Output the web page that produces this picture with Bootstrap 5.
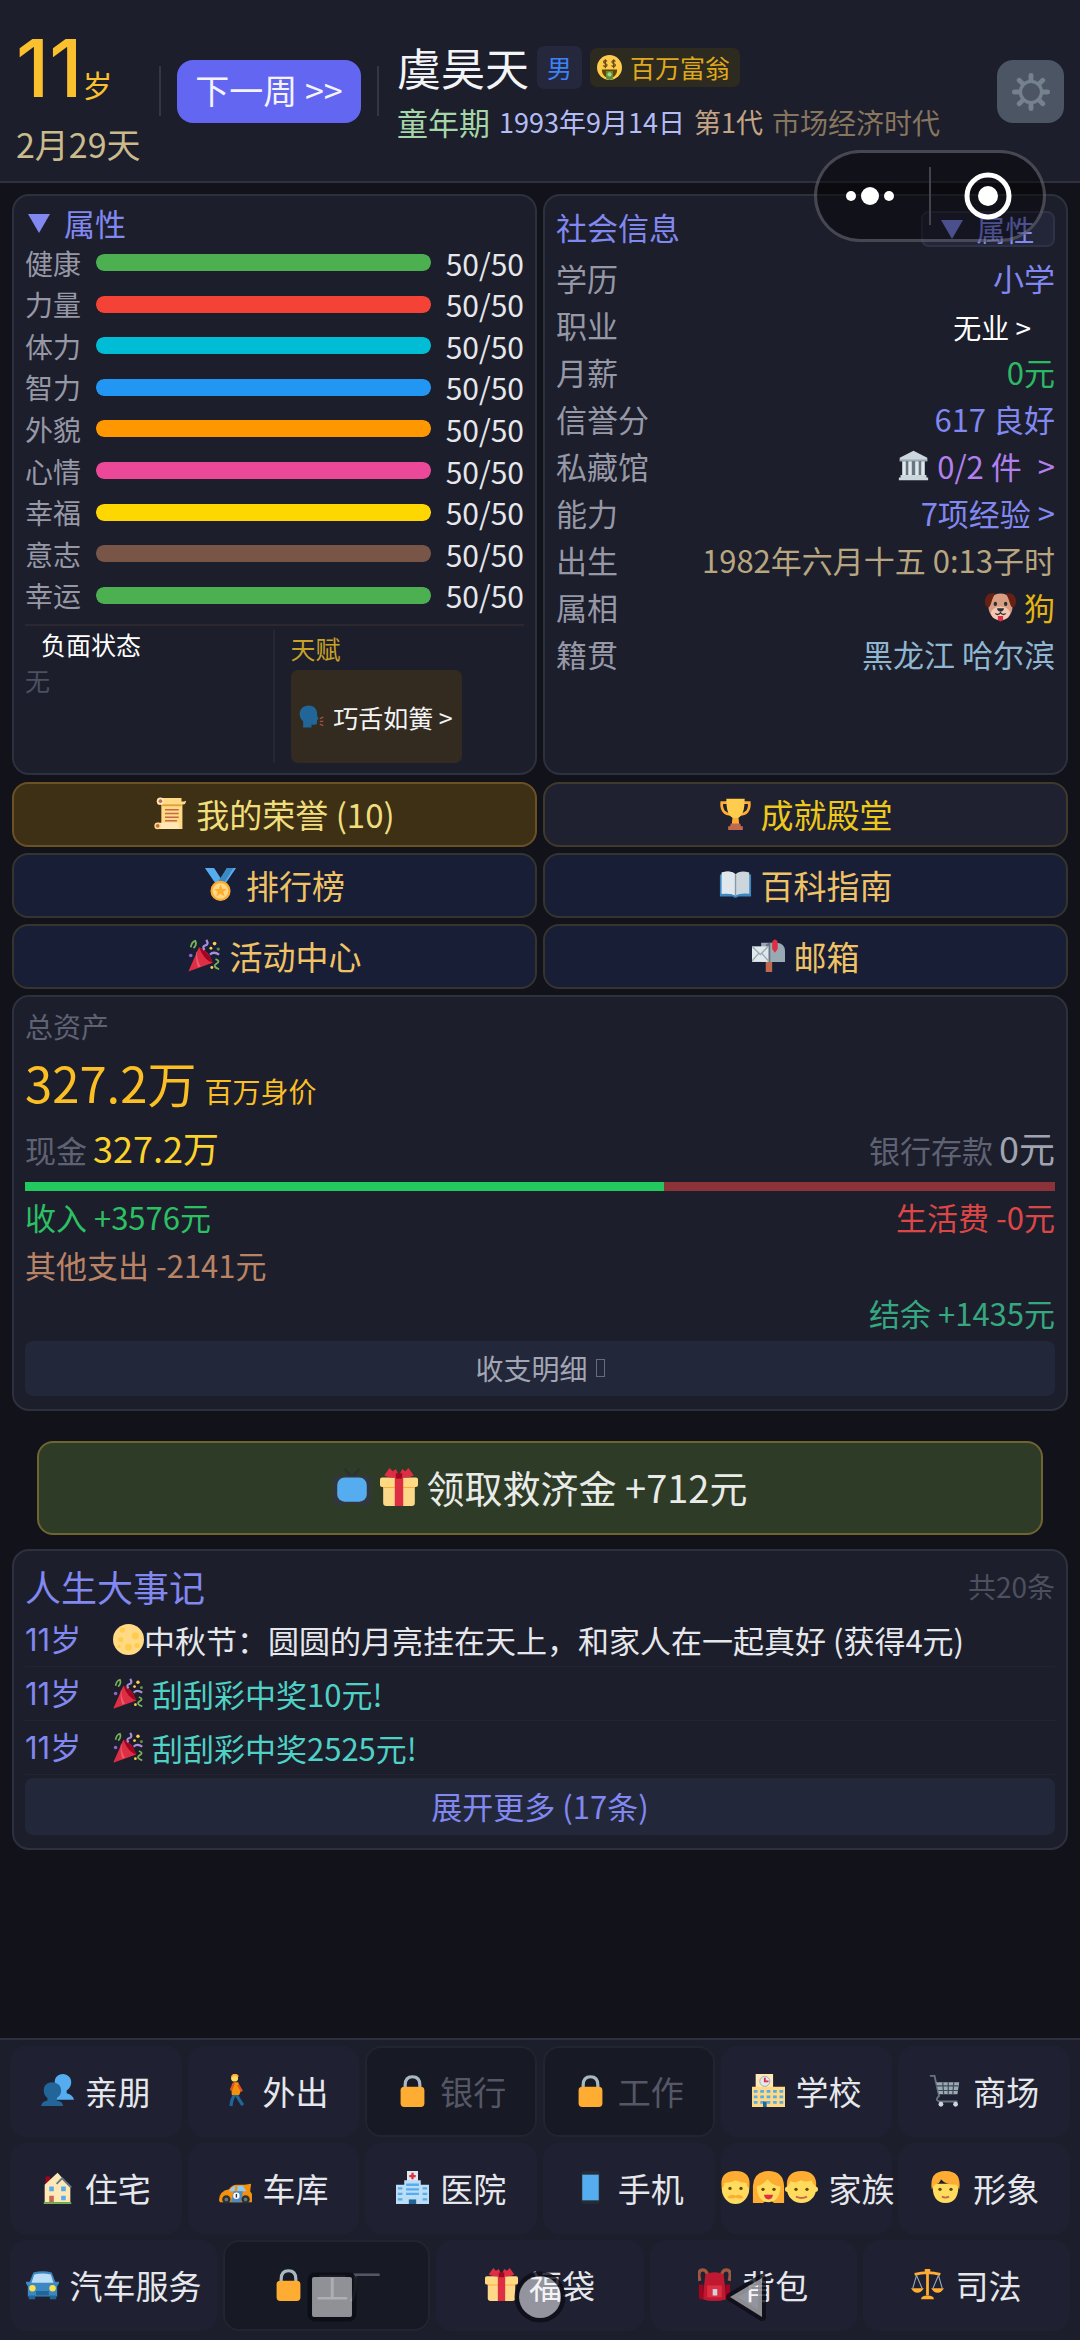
<!DOCTYPE html>
<html lang="zh-CN" data-bs-theme="dark">
<head>
<meta charset="utf-8">
<meta name="viewport" content="width=device-width, initial-scale=1">
<title>人生模拟</title>
<link rel="stylesheet" href="https://cdn.jsdelivr.net/npm/bootstrap@5.3.0/dist/css/bootstrap.min.css">
<style>
:root{--panel:#1c1e2c;--line:#2d303d;--indigo:#8188f0;--muted:#9698a6;--dim:#5f6273}
body{background:#12121b;color:#e5e7eb;font-family:"Noto Sans CJK SC",sans-serif;font-size:31px;line-height:40px}
button{font-family:inherit}
.ico{width:1em;height:1em;flex:none;display:block}
.btn{--bs-btn-border-width:0px;line-height:40px;padding:0;color:inherit;font-size:inherit}
.indigo,.btn.indigo{color:var(--indigo)}
.teal{color:#4fd1c5}
.c-gold{color:#c9a227}
.c-faint{color:#4b5160}
.c-salary{color:#2bb964}
.c-violet{color:#b180ec}
.c-sand{color:#b8a680}
.c-zodiac{color:#e5b50f}
.c-home{color:#90b6d1}
.c-cash{color:#fbd32a}
.c-bank{color:#a0a4b0}
.c-in{color:#2bc163}
.c-out{color:#dc4646}
.c-other{color:#b98365}
.c-left{color:#35a880}

.top-bar{background:var(--panel);border-bottom:2px solid #2f303f;height:183px;padding:0 16px}
.age-box{width:143px;padding-top:28px}
.age-num{font:500 80px/80px Inter,"Noto Sans CJK SC",sans-serif;color:#fbc02d}
.age-unit{font-size:30px;line-height:40px;color:#fbc02d}
.age-day{font-size:34px;color:#c9bb8c;margin-top:16px}
.v-rule{width:2px;height:50px;background:#343645;margin-top:66px}
.btn.next-week{background:#6366f1;color:#f3f4ff;font-size:34px;width:184px;height:63px;border-radius:16px;margin:60px 16px 0;padding-bottom:3px}
.who{padding:42px 0 0 18px}
.who-name{font-size:44px;line-height:50px;color:#f3f4f6}
.tag-sex{background:#25273c;color:#3b82f6;font-size:25px;line-height:43px;padding:0 10px;border-radius:7px}
.tag-rich{background:#2d2a1f;color:#e0a91c;font-size:25px;line-height:39px;padding:0 10px 0 7px;border-radius:7px}
.who-meta{font-size:27px;margin-top:10px;gap:9px}
.meta-stage{font-size:31px;color:#a5d6a7}
.meta-date{color:#b3bdf5}
.meta-gen{color:#c4a484}
.meta-era{font-size:28px;color:#87765f}
.btn.gear{background:#4b5563;width:67px;height:63px;border-radius:16px;margin-top:60px;font-size:40px}
.capsule{position:absolute;right:34px;top:150px;width:232px;height:92px;border:3px solid rgba(160,160,175,.38);border-radius:46px;background:rgba(0,0,0,.42)}

.sheet{padding:11px 12px 0}
.gap-s{gap:6px}
.panel{background:var(--panel);border:2px solid var(--line);border-radius:17px}
.tri{width:0;height:0;border:11px solid transparent;border-top:19px solid var(--indigo);border-bottom:0}

.attr{padding:10px 11px}
.attr-head{line-height:34px;padding-left:3px;gap:14px}
.attr-list{height:380px;display:grid;grid-template-rows:repeat(9,1fr);padding:2px 0 4px}
.attr-row{gap:15px}
.attr-row .progress{height:17px;border-radius:8px;background:#2a2c3a}
.attr-row .progress-bar{border-radius:8px}
.attr-name{font-size:28px;width:56px;color:var(--muted)}
.attr-val{font-size:30px}
.bar-green{background:#4caf50}
.bar-red{background:#f44336}
.bar-cyan{background:#00bcd4}
.bar-blue{background:#2196f3}
.bar-orange{background:#ff9800}
.bar-pink{background:#ec4899}
.bar-yellow{background:#ffd700}
.bar-brown{background:#795548}
.attr-foot{border-top:2px solid #2d2730;margin-top:4px;padding-top:4px;font-size:25px;line-height:28px}
.foot-l{border-right:2px solid #262735}
.btn.talent{background:#332b20;border-radius:7px;height:93px;width:171px;color:#f3f4f6;gap:9px;margin-top:8px;font-size:25px}

.info{padding:8px 11px}
.info-head{height:46px;margin-bottom:4px}
.btn.attr-pill{background:#232539;border:2px solid #2f3144;border-radius:8px;width:134px;height:36px;margin-top:4px;gap:13px;font-size:29px;line-height:32px}
.info-row{height:47px;color:var(--muted)}
.info-row dt{font-weight:400}
.info-row dd{margin:0}
.btn.job{font-size:28px;color:#fff}

.menu-area{margin-top:7px}
.btn.menu-btn{height:65px;border:2px solid #35342f;border-radius:16px;background:#181e35;color:#efc266;font-size:33px;gap:9px;padding-bottom:2px}
.btn.menu-honor{background:#3d3014;border-color:#6b5224;color:#f0de7c}
.btn.menu-hall{background:#1f2130;border-color:#3f3a2c;color:#ecc91a}

.asset{padding:9px 11px;margin-top:6px}
.cap{font-size:28px;color:var(--dim)}
.worth{color:#fbbf24;height:64px;margin-top:4px}
.worth-num{font-size:49px;line-height:64px}
.worth-tag{font-size:28px}
.cash{color:var(--dim);height:48px;margin-top:9px}
.cash-num{font-size:36px;line-height:48px}
.flow-bar{height:9px;border-radius:0;background:#8b3339;margin:11px 0 2px}
.bar-income{background:#22c95f}
.flow{line-height:48px}
.btn.sub-btn{border-radius:8px;background:#23273a}
.btn.detail{height:55px;font-size:28px;margin:4px 0;padding-bottom:2px;color:#a2a5b3}
.tofu{width:9px;height:18px;border:1px solid #666a7b}

.btn.relief{margin:30px 25px 14px;height:94px;border:2px solid #70642f;border-radius:16px;background:#2e3b26;color:#e8ebe8;font-size:38px;gap:9px;padding-bottom:2px}

.life{padding:8px 11px 13px}
.life-head{height:54px}
.life-title{font-size:36px}
.life-count{font-size:28px;color:#4d505e}
.life-row{height:54px;border-bottom:1px solid #222432}
.life-age{width:88px;font-family:Inter,"Noto Sans CJK SC",sans-serif;color:var(--indigo);flex:none}
.btn.more{height:57px;margin-top:3px;padding-bottom:2px}

.dock{background:var(--panel);border-top:2px solid #2e3040;padding:6px 10px 9px;gap:6px}
.dock-row{gap:6px}
.btn.tile{flex:1 1 0;min-width:0;height:91px;border:2px solid #1f2132;border-radius:16px;background:#1f2132;color:#e5e7eb;font-size:33px;gap:11px;white-space:nowrap;padding-bottom:2px}
.btn.tile-off{background:#171924;border-color:#22242f;color:#555766}
.sys-keys{position:fixed;left:0;right:0;bottom:14px;height:58px;gap:150px;pointer-events:none}
.sys-keys svg{width:58px;height:58px}
</style>
<script src="https://cdn.jsdelivr.net/npm/bootstrap@5.3.0/dist/js/bootstrap.bundle.min.js"></script>
</head>
<body>
<svg class="d-none" xmlns="http://www.w3.org/2000/svg">
<symbol id="i-gear" viewBox="0 0 36 36"><g fill="none" stroke="#75818d"><circle cx="18" cy="18" r="9.500" stroke-width="3"/><path stroke-width="4.400" stroke-linecap="round" d="M18 3v4M18 29v4M3 18h4M29 18h4M7.400 7.400l2.400 2.400M26.200 26.200l2.400 2.400M28.600 7.400l-2.400 2.400M9.800 26.200l-2.400 2.400"/></g></symbol>
<symbol id="i-rich" viewBox="0 0 36 36"><circle cx="18" cy="18" r="18" fill="#ffcb4c"/><path fill="#664500" d="M7 21h22c0 8-5 12-11 12S7 29 7 21z"/><path fill="#5c913b" d="M13 23h10v11q-5 4-10 0z"/><circle cx="18" cy="28" r="3" fill="#a7d28b"/><path d="M14.500 9.500c-1-2-5-2-5 .5s5 2 5 4.500-4 3-5.500.5M12 6v13M26.500 9.500c-1-2-5-2-5 .5s5 2 5 4.500-4 3-5.500.5M24 6v13" fill="none" stroke="#65471b" stroke-width="1.700"/></symbol>
<symbol id="i-speak" viewBox="0 0 36 36"><path fill="#226699" d="M14 2C6 2 1 8 1 14c0 6 3 9 5 11v9h12v-4h5q3 0 3-3v-4l2-1-2-6C27 8 22 2 14 2z"/><path d="M30 21l5-2M30 25h5M30 29l5 2" stroke="#a4503f" stroke-width="2" fill="none"/></symbol>
<symbol id="i-museum" viewBox="0 0 36 36"><path fill="#ccd6dd" d="M18 1L2 9v4h32V9zM3 29h30v3H3zM1 32h34v3H1z"/><path fill="#66757f" d="M5 13h26v16H5z"/><path fill="#e1e8ed" d="M5 13h4v16H5zM12 13h4v16h-4zM20 13h4v16h-4zM27 13h4v16h-4z"/><path fill="#99aab5" d="M2 11h32v2H2z"/></symbol>
<symbol id="i-dog" viewBox="0 0 36 36"><path fill="#d99e82" d="M18 3c9 0 14 7 14 15 0 9-6 15-14 15S4 27 4 18C4 10 9 3 18 3z"/><path fill="#662113" d="M12 3C5 1 0 5 0 12c0 5 2 7 4 7 3 0 3-9 8-16zM24 3c7-2 12 2 12 9 0 5-2 7-4 7-3 0-3-9-8-16z"/><path fill="#f4c7b5" d="M18 18c6 0 11 4 11 8s-5 8-11 8-11-4-11-8 5-8 11-8z"/><ellipse cx="12" cy="15" rx="2" ry="2.500" fill="#292f33"/><ellipse cx="24" cy="15" rx="2" ry="2.500" fill="#292f33"/><path fill="#292f33" d="M14 20h8q0 3-4 4-4-1-4-4z"/><path d="M12 26q3 3 6-1 3 4 6 1" fill="none" stroke="#292f33" stroke-width="1.500"/><path fill="#dd2e44" d="M15 29h6v4q-3 5-6 0z"/></symbol>
<symbol id="i-scroll" viewBox="0 0 36 36"><path fill="#ffd983" d="M6 1h24v4q6 0 5-2 0 6-4 5v27H8V8H4z"/><path fill="#e39f3d" d="M8 8h22v2H8z"/><ellipse cx="7" cy="4.500" rx="4" ry="4" fill="#ffe8b6"/><circle cx="7" cy="4.500" r="2" fill="#c1694f"/><path fill="#ffe8b6" d="M4 28h24q-2 3 0 7H4z"/><circle cx="4" cy="31.500" r="3.600" fill="#ffd983"/><circle cx="4" cy="31.500" r="2" fill="#c1694f"/><path d="M12 14h15M12 18h15M12 22h15M12 26h13" stroke="#c1694f" stroke-width="1.600"/></symbol>
<symbol id="i-trophy" viewBox="0 0 36 36"><path d="M9 6H3c-1 9 4 13 10 13M27 6h6c1 9-4 13-10 13" fill="none" stroke="#ffac33" stroke-width="3"/><path fill="#ffcc4d" d="M8 2h20c0 12-2 18-7 21l1 8h-8l1-8C10 20 8 14 8 2z"/><path fill="#ffac33" d="M15 23h6l1 8h-8z"/><path fill="#c1694f" d="M13 29h10l1 3h2v4H10v-4h2z"/></symbol>
<symbol id="i-medal" viewBox="0 0 36 36"><path fill="#55acee" d="M1 0h10l9 14-6 5zM35 0H25l-7 12 4 7z"/><path fill="#3b88c3" d="M25 0l-9 14 5 4L32 0z"/><circle cx="18" cy="25" r="11" fill="#ffac33"/><circle cx="18" cy="25" r="8.500" fill="#ffd983"/><path fill="#ffac33" d="M18 18l2 5h5l-4 3 1.500 5L18 28l-4.500 3 1.500-5-4-3h5z"/></symbol>
<symbol id="i-book" viewBox="0 0 36 36"><path fill="#3b88c3" d="M1 7h34v24H21q-3 3-6 0H1z"/><path fill="#ccd6dd" d="M3 5q10-3 15 2 5-5 15-2v23q-10-1-15 2-5-3-15-2z"/><path fill="#e1e8ed" d="M3 5q10-3 15 2v23q-5-3-15-2z"/><path d="M18 7v23" stroke="#8899a6" stroke-width="1.500"/></symbol>
<symbol id="i-party" viewBox="0 0 36 36"><path fill="#dd2e44" d="M12 9Q22 12 27 26L2 35q-2 1-1-1z"/><path fill="#a0041e" d="M12 9q11 5 15 17-9-2-15-17z"/><path fill="#ea596e" d="M9 15q-1 9 2 16l3-1Q9 22 10 13z"/><path d="M3 9q1-6 5-7 2 4-2 8" fill="none" stroke="#77b255" stroke-width="2"/><path d="M18 12q-3-4 1-5t1-6" fill="none" stroke="#aa8dd8" stroke-width="2.500"/><path d="M24 17q4-4 10 0" fill="none" stroke="#aa8dd8" stroke-width="2.500"/><path d="M30 22q6 2 1 5t3 6" fill="none" stroke="#77b255" stroke-width="2"/><circle cx="29" cy="5" r="2" fill="#ffcc4d"/><circle cx="25" cy="10" r="1.600" fill="#ffcc4d"/><circle cx="33" cy="11" r="1.800" fill="#5c913b"/><circle cx="3" cy="18" r="2" fill="#9266cc"/><circle cx="26" cy="31" r="1.600" fill="#ffcc4d"/></symbol>
<symbol id="i-mail" viewBox="0 0 36 36"><path fill="#c1694f" d="M15 20h7v16h-7z"/><path fill="#99aab5" d="M10 4h17q9 1 9 9v12H10z"/><path fill="#67757f" d="M14 12q0-8 6-8v21h-6z"/><path fill="#e1e8ed" d="M0 8h18v17H0z"/><path d="M0 8l9 9 9-9M0 24l7-8M18 24l-7-8" fill="none" stroke="#99aab5" stroke-width="1.500"/><path fill="#dd2e44" d="M22 3q3-5 6 0v8l-3 4-3-4z"/></symbol>
<symbol id="i-tv" viewBox="0 0 36 36"><path d="M11 1l7 8 7-8" fill="none" stroke="#292f33" stroke-width="2"/><rect x="0" y="7" width="36" height="27" rx="4" fill="#31373d"/><path fill="#31373d" d="M2 31h6v5H2zM28 31h6v5h-6z"/><rect x="4" y="9" width="28" height="23" rx="7" fill="#55acee"/></symbol>
<symbol id="i-gift" viewBox="0 0 36 36"><path fill="#fdd888" d="M3 14h30v19q0 3-3 3H6q-3 0-3-3z"/><path fill="#fcab40" d="M3 17h30v2H3z"/><rect y="9" width="36" height="9" rx="2" fill="#ffd983"/><path fill="#dd2e44" d="M14 9h8v27h-8z"/><path fill="#dd2e44" d="M18 9Q9 10 4 7L9 0l3 3 3-2 3 6 3-6 3 2 3-3 5 7q-5 3-14 2z"/><path fill="#a0041e" d="M15 5h6v5h-6z"/></symbol>
<symbol id="i-moon" viewBox="0 0 36 36"><circle cx="18" cy="18" r="18" fill="#ffd983"/><g fill="#ffcc4d"><circle cx="11" cy="7" r="3"/><circle cx="26" cy="14" r="4"/><circle cx="9" cy="18" r="3"/><circle cx="18" cy="27" r="4"/><circle cx="28" cy="25" r="3"/><circle cx="7" cy="26" r="2"/></g></symbol>
<symbol id="i-people" viewBox="0 0 36 36"><path fill="#55acee" d="M24 0c-6 0-9 4-9 9s2 8 4 10v4l-3 5h20q-1-5-8-7v-3c3-2 5-5 5-9 0-5-4-9-9-9z"/><path fill="#226699" d="M12 9c-6 0-9 4-9 9 0 4 2 7 4 8v3q-6 1-7 6h24q0-5-7-6v-3c3-1 5-4 5-8 0-5-4-9-10-9z"/></symbol>
<symbol id="i-walk" viewBox="0 0 36 36"><path d="M17 22l-3 7-1 6M18 21l4 7 4 6" fill="none" stroke="#226699" stroke-width="3.500"/><path fill="#f4900c" d="M16 9h5l3 9-2 5h-8q-1-8 2-14z"/><path d="M16 10l-3 8M21 12l4 7" fill="none" stroke="#dd551f" stroke-width="2.600"/><circle cx="17" cy="4.500" r="3.800" fill="#ffdc5d"/><path d="M14 3q3-5 7 0" fill="none" stroke="#ffac33" stroke-width="2"/></symbol>
<symbol id="i-lock" viewBox="0 0 36 36"><path d="M10 17v-5q0-9 8-9t8 9v5" fill="none" stroke="#aab8c2" stroke-width="3.500"/><rect x="5" y="14" width="26" height="22" rx="4" fill="#ffac33"/></symbol>
<symbol id="i-school" viewBox="0 0 36 36"><path fill="#ffe8b6" d="M4 0h19v15H4z"/><path fill="#ffd983" d="M0 14h36v22H0z"/><circle cx="14" cy="8" r="5.500" fill="#e1e8ed" stroke="#99aab5" stroke-width="1"/><path d="M14 4v4h4" fill="none" stroke="#dd2e44" stroke-width="2"/><path d="M2 19h32M2 25h32M2 31h32" stroke="#55acee" stroke-width="3" stroke-dasharray="4 3"/><path fill="#226699" d="M12 30h4v6h-4z"/></symbol>
<symbol id="i-cart" viewBox="0 0 36 36"><path d="M1 2h5l5 22q-5 4 0 6h20" fill="none" stroke="#66757f" stroke-width="2"/><path fill="#99aab5" d="M8 9h25l-2 13H11z"/><path d="M8 13h24M10 18h22M15 9l1 13M21 9v13M27 9l-1 13" stroke="#404a55" stroke-width="1.300"/><circle cx="13" cy="33" r="2.600" fill="#ccd6dd"/><circle cx="29" cy="33" r="2.600" fill="#ccd6dd"/></symbol>
<symbol id="i-house" viewBox="0 0 36 36"><path fill="#a0041e" d="M5 6h5v10H5z"/><path fill="#ffe8b6" d="M4 15L18 2l14 15v17H4z"/><path d="M17 14l6-6 10 10" fill="none" stroke="#66757f" stroke-width="2"/><path fill="#55acee" d="M9 17h5v5H9zM22 17h5v5h-5zM22 27h5v5h-5z"/><path fill="#c1694f" d="M9 27h5v7H9z"/><path fill="#77b255" d="M3 34h30v2H3z"/></symbol>
<symbol id="i-race" viewBox="0 0 36 36"><path fill="#f4900c" d="M0 32q0-10 11-12 3-5 8-5h9l7-1-1 8 2 3v9H1z"/><path fill="#8ccaf7" d="M12 20q3-4 6-4l-1 6h-6zM20 16h6l4 6h-10z"/><path fill="#4d8bc0" d="M16 22h10l-2 12H13z"/><circle cx="19" cy="27" r="3.500" fill="#fff"/><path d="M19 25v4" stroke="#292f33" stroke-width="1.500"/><circle cx="8" cy="31" r="4.500" fill="#292f33"/><circle cx="29" cy="31" r="4.500" fill="#292f33"/><circle cx="8" cy="31" r="2" fill="#66757f"/><circle cx="29" cy="31" r="2" fill="#66757f"/></symbol>
<symbol id="i-hosp" viewBox="0 0 36 36"><path fill="#e1e8ed" d="M12 0h12v11H12z"/><path d="M18 2v7M14.500 5.500h7" stroke="#dd2e44" stroke-width="2.500"/><path fill="#bbddf5" d="M0 15h36v21H0zM9 10h18v26H9z"/><path d="M11 15h14M11 20h14M11 25h14M2 19h5M2 25h5M2 31h5M29 19h5M29 25h5M29 31h5" stroke="#55acee" stroke-width="2.600"/><path fill="#226699" d="M14 31h8v5h-8z"/></symbol>
<symbol id="i-phone" viewBox="0 0 36 36"><rect x="8" y="0" width="20" height="36" rx="3" fill="#262c35"/><path fill="#55acee" d="M9 4h18v28H9z"/></symbol>
<symbol id="i-man" viewBox="0 0 36 36"><ellipse cx="18" cy="19" rx="15" ry="17" fill="#ffdc5d"/><path fill="#ffac33" d="M3 19Q0 0 18 0t15 19q-3-2-3-6-6 0-12-3-5 3-12 3 0 4-3 6z"/><circle cx="12" cy="19" r="1.800" fill="#664500"/><circle cx="24" cy="19" r="1.800" fill="#664500"/><path fill="#ffac33" d="M9 29q4-5 9-2 5-3 9 2-4 2-9 0-5 2-9 0z"/></symbol>
<symbol id="i-woman" viewBox="0 0 36 36"><path fill="#ffac33" d="M1 35V16Q2 0 18 0t17 16v19H24L18 30l-6 5z"/><path fill="#ffdc5d" d="M5 17q6-1 12-8 5 7 14 8-1 17-13 17T5 17z"/><circle cx="12" cy="20" r="1.800" fill="#664500"/><circle cx="24" cy="20" r="1.800" fill="#664500"/><path fill="#dd2e44" d="M13 26h10q-1 5-5 5t-5-5z"/></symbol>
<symbol id="i-boy" viewBox="0 0 36 36"><circle cx="3" cy="20" r="3" fill="#ffdc5d"/><circle cx="33" cy="20" r="3" fill="#ffdc5d"/><circle cx="18" cy="19" r="16" fill="#ffdc5d"/><path fill="#ffac33" d="M2 17Q1 0 18 0t16 17q-4-3-5-7-6 3-12 0-6 4-11 1-1 4-4 6z"/><circle cx="12" cy="20" r="1.800" fill="#664500"/><circle cx="24" cy="20" r="1.800" fill="#664500"/><path d="M12 28q6 3 12 0" fill="none" stroke="#c1694f" stroke-width="2"/></symbol>
<symbol id="i-face" viewBox="0 0 36 36"><path fill="#ffdc5d" d="M4 14h28q1 21-14 21T4 14z"/><path fill="#ffac33" d="M3 20Q0 0 18 0t15 20l-3-5Q18 15 13 9q-1 5-7 6z"/><circle cx="12" cy="20" r="1.800" fill="#664500"/><circle cx="24" cy="20" r="1.800" fill="#664500"/><path d="M14 28q4 2 8 0" fill="none" stroke="#c1694f" stroke-width="2"/></symbol>
<symbol id="i-car" viewBox="0 0 36 36"><path fill="#3b88c3" d="M8 5q10-3 20 0l4 10h4v2l-2 3v11H2V20l-2-3v-2h4z"/><path fill="#bbddf5" d="M9 7q9-2 18 0l3 9H6z"/><path fill="#226699" d="M3 30h7v4H3zM26 30h7v4h-7zM11 25h14v5H11z"/><circle cx="7" cy="22" r="3.500" fill="#ffe14d"/><circle cx="29" cy="22" r="3.500" fill="#ffe14d"/></symbol>
<symbol id="i-bag" viewBox="0 0 36 36"><path d="M11 14Q11 2 5 2T2 14M25 14Q25 2 31 2t3 12" fill="none" stroke="#a0563f" stroke-width="3.500"/><path fill="#be1931" d="M8 7q10-5 20 0l3 27q-13 4-26 0z"/><path fill="#a0041e" d="M1 18h5v16H3q-2 0-2-3zM30 18h5v13q0 3-2 3h-3z"/><path fill="#dd2e44" d="M10 19h16v13H10z"/><path fill="#ccd6dd" d="M16 23h5v7h-5z"/></symbol>
<symbol id="i-scale" viewBox="0 0 36 36"><path d="M18 2v28M4 7q14-4 28 0" fill="none" stroke="#ffac33" stroke-width="3"/><path d="M6 8L2 22M6 8l6 14M30 8l-6 14M30 8l4 14" stroke="#99aab5" stroke-width="1.200"/><path fill="#ffac33" d="M0 22h14q-3 5-7 5t-7-5zM22 22h14q-3 5-7 5t-7-5zM11 34q0-4 7-4t7 4zM15 1h6v5h-6z"/></symbol>
</svg>

<div class="d-flex flex-column min-vh-100 position-relative">
<header class="top-bar d-flex align-items-start">
  <div class="age-box">
    <div class="d-flex align-items-baseline"><span class="age-num">11</span><span class="age-unit">岁</span></div>
    <div class="age-day">2月29天</div>
  </div>
  <div class="v-rule"></div>
  <button class="btn next-week" type="button">下一周 &gt;&gt;</button>
  <div class="v-rule"></div>
  <div class="who flex-grow-1">
    <div class="d-flex align-items-center">
      <span class="who-name me-2">虞昊天</span>
      <span class="tag-sex me-2">男</span>
      <span class="tag-rich d-flex align-items-center gap-2"><svg class="ico"><use href="#i-rich"/></svg>百万富翁</span>
    </div>
    <div class="who-meta d-flex align-items-center">
      <span class="meta-stage">童年期</span><span class="meta-date">1993年9月14日</span><span class="meta-gen">第1代</span><span class="meta-era">市场经济时代</span>
    </div>
  </div>
  <button class="btn gear d-flex align-items-center justify-content-center" type="button" aria-label="设置"><svg class="ico"><use href="#i-gear"/></svg></button>
</header>

<main class="sheet d-flex flex-column">
  <div class="d-flex gap-s">
    <section class="panel attr w-50">
      <div class="attr-head indigo d-flex align-items-center"><span class="tri"></span>属性</div>
      <div class="attr-list">
        <div class="attr-row d-flex align-items-center"><span class="attr-name">健康</span><div class="progress flex-grow-1"><div class="progress-bar bar-green" style="width:100%"></div></div><span class="attr-val">50/50</span></div>
        <div class="attr-row d-flex align-items-center"><span class="attr-name">力量</span><div class="progress flex-grow-1"><div class="progress-bar bar-red" style="width:100%"></div></div><span class="attr-val">50/50</span></div>
        <div class="attr-row d-flex align-items-center"><span class="attr-name">体力</span><div class="progress flex-grow-1"><div class="progress-bar bar-cyan" style="width:100%"></div></div><span class="attr-val">50/50</span></div>
        <div class="attr-row d-flex align-items-center"><span class="attr-name">智力</span><div class="progress flex-grow-1"><div class="progress-bar bar-blue" style="width:100%"></div></div><span class="attr-val">50/50</span></div>
        <div class="attr-row d-flex align-items-center"><span class="attr-name">外貌</span><div class="progress flex-grow-1"><div class="progress-bar bar-orange" style="width:100%"></div></div><span class="attr-val">50/50</span></div>
        <div class="attr-row d-flex align-items-center"><span class="attr-name">心情</span><div class="progress flex-grow-1"><div class="progress-bar bar-pink" style="width:100%"></div></div><span class="attr-val">50/50</span></div>
        <div class="attr-row d-flex align-items-center"><span class="attr-name">幸福</span><div class="progress flex-grow-1"><div class="progress-bar bar-yellow" style="width:100%"></div></div><span class="attr-val">50/50</span></div>
        <div class="attr-row d-flex align-items-center"><span class="attr-name">意志</span><div class="progress flex-grow-1"><div class="progress-bar bar-brown" style="width:100%"></div></div><span class="attr-val">50/50</span></div>
        <div class="attr-row d-flex align-items-center"><span class="attr-name">幸运</span><div class="progress flex-grow-1"><div class="progress-bar bar-green" style="width:100%"></div></div><span class="attr-val">50/50</span></div>
      </div>
      <div class="attr-foot d-flex">
        <div class="foot-l w-50"><div class="ps-3 text-white">负面状态</div><div class="mt-2 c-faint">无</div></div>
        <div class="ps-3 w-50"><div class="pt-1 c-gold">天赋</div><button class="btn talent d-flex align-items-center justify-content-center" type="button"><svg class="ico"><use href="#i-speak"/></svg>巧舌如簧 &gt;</button></div>
      </div>
    </section>
    <section class="panel info w-50">
      <div class="info-head d-flex justify-content-between align-items-center"><span class="indigo">社会信息</span><button class="btn attr-pill indigo d-flex align-items-center justify-content-center" type="button"><span class="tri"></span>属性</button></div>
      <dl class="m-0">
        <div class="info-row d-flex justify-content-between align-items-center"><dt>学历</dt><dd class="indigo">小学</dd></div>
        <div class="info-row d-flex justify-content-between align-items-center"><dt>职业</dt><dd class="pe-4"><button class="btn job" type="button">无业 &gt;</button></dd></div>
        <div class="info-row d-flex justify-content-between align-items-center"><dt>月薪</dt><dd class="c-salary">0元</dd></div>
        <div class="info-row d-flex justify-content-between align-items-center"><dt>信誉分</dt><dd class="indigo">617 良好</dd></div>
        <div class="info-row d-flex justify-content-between align-items-center"><dt>私藏馆</dt><dd class="d-flex align-items-center gap-2 c-violet"><svg class="ico"><use href="#i-museum"/></svg><span>0/2 件</span><span class="ps-2">&gt;</span></dd></div>
        <div class="info-row d-flex justify-content-between align-items-center"><dt>能力</dt><dd class="indigo">7项经验 &gt;</dd></div>
        <div class="info-row d-flex justify-content-between align-items-center"><dt>出生</dt><dd class="c-sand">1982年六月十五 0:13子时</dd></div>
        <div class="info-row d-flex justify-content-between align-items-center"><dt>属相</dt><dd class="d-flex align-items-center gap-2 c-zodiac"><svg class="ico"><use href="#i-dog"/></svg>狗</dd></div>
        <div class="info-row d-flex justify-content-between align-items-center"><dt>籍贯</dt><dd class="c-home">黑龙江 哈尔滨</dd></div>
      </dl>
    </section>
  </div>

  <div class="d-flex flex-column gap-s menu-area">
    <div class="d-flex gap-s">
      <button class="btn menu-btn menu-honor w-50 d-flex align-items-center justify-content-center" type="button"><svg class="ico"><use href="#i-scroll"/></svg>我的荣誉 (10)</button>
      <button class="btn menu-btn menu-hall w-50 d-flex align-items-center justify-content-center" type="button"><svg class="ico"><use href="#i-trophy"/></svg>成就殿堂</button>
    </div>
    <div class="d-flex gap-s">
      <button class="btn menu-btn w-50 d-flex align-items-center justify-content-center" type="button"><svg class="ico"><use href="#i-medal"/></svg>排行榜</button>
      <button class="btn menu-btn w-50 d-flex align-items-center justify-content-center" type="button"><svg class="ico"><use href="#i-book"/></svg>百科指南</button>
    </div>
    <div class="d-flex gap-s">
      <button class="btn menu-btn w-50 d-flex align-items-center justify-content-center" type="button"><svg class="ico"><use href="#i-party"/></svg>活动中心</button>
      <button class="btn menu-btn w-50 d-flex align-items-center justify-content-center" type="button"><svg class="ico"><use href="#i-mail"/></svg>邮箱</button>
    </div>
  </div>

  <section class="panel asset">
    <div class="cap">总资产</div>
    <div class="worth d-flex align-items-baseline gap-2"><span class="worth-num">327.2万</span><span class="worth-tag">百万身价</span></div>
    <div class="cash d-flex justify-content-between align-items-baseline">
      <div class="d-flex align-items-baseline gap-s"><span>现金</span><span class="cash-num c-cash">327.2万</span></div>
      <div class="d-flex align-items-baseline gap-s"><span>银行存款</span><span class="cash-num c-bank">0元</span></div>
    </div>
    <div class="progress flow-bar"><div class="progress-bar bar-income" style="width:62%"></div></div>
    <div class="flow d-flex justify-content-between"><span class="c-in">收入 +3576元</span><span class="c-out">生活费 -0元</span></div>
    <div class="flow c-other">其他支出 -2141元</div>
    <div class="flow text-end c-left">结余 +1435元</div>
    <button class="btn sub-btn detail w-100 d-flex align-items-center justify-content-center gap-2" type="button">收支明细<span class="tofu"></span></button>
  </section>

  <button class="btn relief d-flex align-items-center justify-content-center" type="button"><svg class="ico"><use href="#i-tv"/></svg><svg class="ico"><use href="#i-gift"/></svg>领取救济金 +712元</button>

  <section class="panel life">
    <div class="life-head d-flex justify-content-between align-items-center"><span class="indigo life-title">人生大事记</span><span class="life-count">共20条</span></div>
    <div class="life-row d-flex align-items-center"><span class="life-age">11岁</span><svg class="ico"><use href="#i-moon"/></svg><span>中秋节：圆圆的月亮挂在天上，和家人在一起真好 (获得4元)</span></div>
    <div class="life-row d-flex align-items-center teal"><span class="life-age">11岁</span><svg class="ico me-2"><use href="#i-party"/></svg><span>刮刮彩中奖10元!</span></div>
    <div class="life-row d-flex align-items-center teal"><span class="life-age">11岁</span><svg class="ico me-2"><use href="#i-party"/></svg><span>刮刮彩中奖2525元!</span></div>
    <button class="btn sub-btn more w-100 indigo" type="button">展开更多 (17条)</button>
  </section>
</main>

<nav class="dock d-flex flex-column mt-auto">
  <div class="dock-row d-flex">
    <button class="btn tile d-flex align-items-center justify-content-center" type="button"><svg class="ico"><use href="#i-people"/></svg>亲朋</button>
    <button class="btn tile d-flex align-items-center justify-content-center" type="button"><svg class="ico"><use href="#i-walk"/></svg>外出</button>
    <button class="btn tile tile-off d-flex align-items-center justify-content-center" type="button"><svg class="ico"><use href="#i-lock"/></svg>银行</button>
    <button class="btn tile tile-off d-flex align-items-center justify-content-center" type="button"><svg class="ico"><use href="#i-lock"/></svg>工作</button>
    <button class="btn tile d-flex align-items-center justify-content-center" type="button"><svg class="ico"><use href="#i-school"/></svg>学校</button>
    <button class="btn tile d-flex align-items-center justify-content-center" type="button"><svg class="ico"><use href="#i-cart"/></svg>商场</button>
  </div>
  <div class="dock-row d-flex">
    <button class="btn tile d-flex align-items-center justify-content-center" type="button"><svg class="ico"><use href="#i-house"/></svg>住宅</button>
    <button class="btn tile d-flex align-items-center justify-content-center" type="button"><svg class="ico"><use href="#i-race"/></svg>车库</button>
    <button class="btn tile d-flex align-items-center justify-content-center" type="button"><svg class="ico"><use href="#i-hosp"/></svg>医院</button>
    <button class="btn tile d-flex align-items-center justify-content-center" type="button"><svg class="ico"><use href="#i-phone"/></svg>手机</button>
    <button class="btn tile d-flex align-items-center justify-content-center" type="button"><span class="d-flex"><svg class="ico"><use href="#i-man"/></svg><svg class="ico"><use href="#i-woman"/></svg><svg class="ico"><use href="#i-boy"/></svg></span>家族</button>
    <button class="btn tile d-flex align-items-center justify-content-center" type="button"><svg class="ico"><use href="#i-face"/></svg>形象</button>
  </div>
  <div class="dock-row d-flex">
    <button class="btn tile d-flex align-items-center justify-content-center" type="button"><svg class="ico"><use href="#i-car"/></svg>汽车服务</button>
    <button class="btn tile tile-off d-flex align-items-center justify-content-center" type="button"><svg class="ico"><use href="#i-lock"/></svg>工厂</button>
    <button class="btn tile d-flex align-items-center justify-content-center" type="button"><svg class="ico"><use href="#i-gift"/></svg>福袋</button>
    <button class="btn tile d-flex align-items-center justify-content-center" type="button"><svg class="ico"><use href="#i-bag"/></svg>背包</button>
    <button class="btn tile d-flex align-items-center justify-content-center" type="button"><svg class="ico"><use href="#i-scale"/></svg>司法</button>
  </div>
</nav>

<div class="capsule d-flex align-items-center">
  <svg width="226" height="86" viewBox="0 0 226 86"><g fill="#fff"><circle cx="34" cy="43" r="5"/><circle cx="53" cy="43" r="9"/><circle cx="72" cy="43" r="5"/><circle cx="171" cy="43" r="10"/></g><circle cx="171" cy="43" r="21" fill="none" stroke="#fff" stroke-width="5"/><path d="M113 14v58" stroke="#42434d" stroke-width="2"/></svg>
</div>
</div>

<div class="sys-keys d-flex justify-content-center">
  <svg viewBox="0 0 58 58"><rect x="7" y="7" width="44" height="44" rx="5" fill="none" stroke="#0b0d15" stroke-width="5" stroke-opacity=".8"/><rect x="9" y="9" width="40" height="40" rx="2" fill="#fff" fill-opacity=".52"/></svg>
  <svg viewBox="0 0 58 58"><circle cx="29" cy="29" r="23" fill="none" stroke="#0b0d15" stroke-width="5" stroke-opacity=".8"/><circle cx="29" cy="29" r="21" fill="#fff" fill-opacity=".52"/></svg>
  <svg viewBox="0 0 58 58"><path d="M11 29L43 10v39z" fill="none" stroke="#0b0d15" stroke-width="8" stroke-linejoin="round" stroke-opacity=".8"/><path d="M11 29L43 10v39z" fill="#fff" fill-opacity=".52"/></svg>
</div>
</body>
</html>
